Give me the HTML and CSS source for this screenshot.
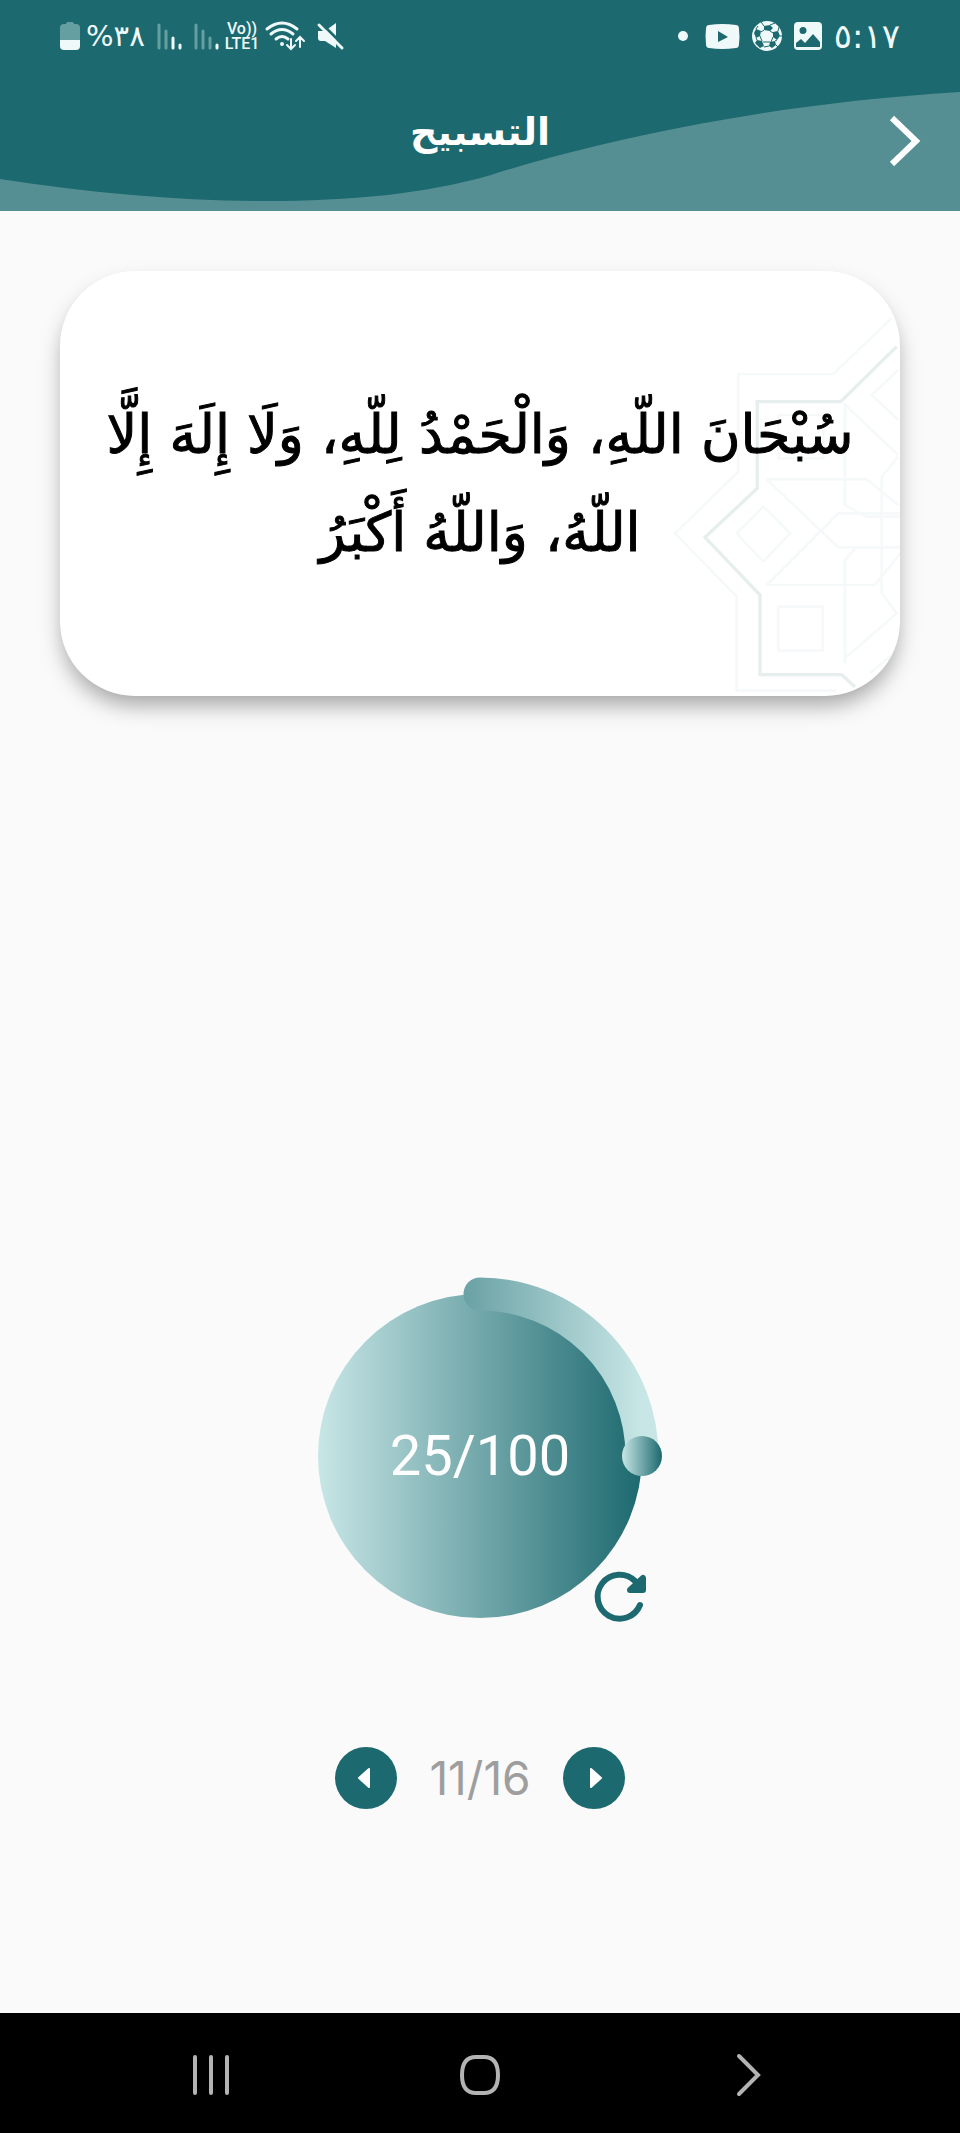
FILE: index.html
```html
<!DOCTYPE html>
<html lang="ar" dir="rtl">
<head>
    <meta charset="UTF-8">
    <meta name="viewport" content="width=device-width, initial-scale=1.0">
    <title>التسبيح</title>
    <link rel="stylesheet" href="styles.css">
</head>
<body>
    <header class="header">
        <svg class="wave" viewBox="0 0 960 211" preserveAspectRatio="none" aria-hidden="true">
            <path d="M0 179C90 193 180 201 266 201C350 201 425 194 491 175C560 153 730 106 960 92V211H0Z"/>
        </svg>
        <div class="status" dir="ltr">
            <div class="status-group">
                <svg width="20" height="28" viewBox="0 0 20 28">
                    <path fill="#659fa2" d="M6 2q0-2 2-2h4q2 0 2 2h2q4 0 4 4v13H0V6q0-4 4-4z"/>
                    <path d="M0 18h20v6q0 4-4 4H4q-4 0-4-4z"/>
                </svg>
                <span class="battery">%٣٨</span>
                <svg class="signal" width="25" height="27" viewBox="0 0 25 27">
                    <path stroke="#659fa2" d="M2 2v23M9 8v17"/>
                    <path d="M16 15v10M23 22v3"/>
                </svg>
                <svg class="signal" width="25" height="27" viewBox="0 0 25 27">
                    <path stroke="#659fa2" d="M2 2v23M9 8v17M16 15v10"/>
                    <path d="M23 22v3"/>
                </svg>
                <span class="volte"><span>Vo))</span><span>LTE1</span></span>
                <svg class="line-icon" width="40" height="30" viewBox="0 0 40 30">
                    <path d="M2 8Q17-4 32 8M6 13q11-9 22 0M11 18q6-5 12 0"/>
                    <path d="M26 18v10m-4-4l4 4 4-4M35 26V16m-4 4l4-4 4 4" stroke-width="2"/>
                    <circle class="dot" cx="17" cy="23" r="2"/>
                </svg>
                <svg class="mute" width="28" height="28" viewBox="0 0 28 28">
                    <path d="M1 9h7L19 1v25L8 19H4q-3 0-3-3z"/>
                    <path d="M5 2l21 21" stroke="#1c696f" stroke-width="3"/>
                    <path d="M2 3l23 23" stroke="#eff9fa" stroke-width="3" stroke-linecap="round"/>
                </svg>
            </div>
            <div class="status-group status-end">
                <svg class="more" width="12" height="12" viewBox="0 0 12 12"><circle cx="6" cy="6" r="5"/></svg>
                <svg width="35" height="25" viewBox="0 0 35 25">
                    <path fill-rule="evenodd" d="M4 1Q17-1 31 1q3 0 3 4 1 8 0 15 0 4-3 4-14 2-27 0-3 0-3-4-1-8 0-15 0-4 3-4zM13 7v11l10-5z"/>
                </svg>
                <svg width="30" height="30" viewBox="0 0 30 30">
                    <circle cx="15" cy="15" r="15"/>
                    <g fill="#1c696f">
                        <path d="M12 5l6-1 3 3-3 3-6-1zM21 11l5-1 2 5-3 4-4-3zM18 21l5-1 1 4-4 3-3-2zM5 19l5 1 2 5-4 2-5-5zM4 8l5 2-1 5-4 2-2-5z"/>
                    </g>
                    <path d="M9 11l3-2M18 10l3 2M21 16l-2 5M18 21h-7M8 15l2 5M12 5L9 1M18 4l5-2M26 10l1-4M25 19l-2 1M28 15h2M24 24l2 2M17 25l-5 1M4 17l1 2M4 8l2-3" fill="none" stroke="#1c696f"/>
                </svg>
                <svg width="28" height="28" viewBox="0 0 28 28">
                    <path fill-rule="evenodd" d="M4 0h20q4 0 4 4v20q0 4-4 4H4q-4 0-4-4V4q0-4 4-4zM9 5a3 3 0 100 7 3 3 0 000-7zM2 21v4h24v-5l-7-8-8 9-4-4z"/>
                </svg>
                <time class="clock">٥:١٧</time>
            </div>
        </div>
        <div class="title-bar">
            <h1>التسبيح</h1>
            <button class="back" type="button" aria-label="رجوع">
                <svg width="34" height="54" viewBox="0 0 34 54"><path d="M4 4l24 23L4 50"/></svg>
            </button>
        </div>
    </header>

    <main class="main">
        <section class="card">
            <svg class="pattern" width="230" height="386" viewBox="150 150 690 1158" aria-hidden="true">
                <g class="faint">
                    <path d="M815 175L640 342H355V635L165 820L350 1010V1292H650"/>
                    <path d="M835 330L755 405L835 480M670 430L835 585M475 465H610V595H475zM675 430V735L740 770H840M440 658H740L835 735M440 658L655 862H840M440 975L655 760H840M440 975H765L840 880M430 740L510 820L430 905L350 820zM475 1040H608V1172H475zM675 1210V900L710 860M675 1195L830 1060L785 1000V650L835 590M750 1240L840 1165"/>
                </g>
                <path class="strong" d="M830 260L662 425H412V685L255 832L420 1005V1244H665L705 1280"/>
            </svg>
            <p class="dhikr">سُبْحَانَ اللّهِ، وَالْحَمْدُ لِلّهِ، وَلَا إِلَهَ إِلَّا اللّهُ، وَاللّهُ أَكْبَرُ</p>
        </section>

        <section class="counter" dir="ltr">
            <button class="dial" type="button">
                <svg width="360" height="360" viewBox="0 0 360 360" aria-hidden="true">
                    <defs>
                        <linearGradient id="disc">
                            <stop offset="0" stop-color="#c8e6e6"/>
                            <stop offset="1" stop-color="#1c696f"/>
                        </linearGradient>
                        <linearGradient id="arc" gradientUnits="userSpaceOnUse" x1="18" y1="0" x2="342" y2="0">
                            <stop offset="0" stop-color="#1c696f"/>
                            <stop offset="1" stop-color="#c8e6e6"/>
                        </linearGradient>
                    </defs>
                    <circle cx="180" cy="180" r="162" fill="url(#disc)"/>
                    <path d="M180 18A162 162 0 01342 180" fill="none" stroke="url(#arc)" stroke-width="33" stroke-linecap="round"/>
                    <circle cx="342" cy="180" r="20" fill="url(#disc)"/>
                </svg>
                <span class="count">25/100</span>
            </button>
            <button class="reset" type="button" aria-label="إعادة">
                <svg width="54" height="54" viewBox="0 0 54 54">
                    <path class="reset-arc" d="M47 35A22 22 0 1 1 42 11"/>
                    <path class="reset-head" d="M50 8v12H37z"/>
                </svg>
            </button>
        </section>

        <nav class="pager" dir="ltr">
            <button type="button" aria-label="السابق">
                <svg width="16" height="22" viewBox="0 0 16 22"><path d="M11 2v18L1 11z"/></svg>
            </button>
            <span class="page">11/16</span>
            <button type="button" aria-label="التالي">
                <svg width="16" height="22" viewBox="0 0 16 22"><path d="M5 2v18l10-9z"/></svg>
            </button>
        </nav>
    </main>

    <footer class="system-nav" dir="ltr">
        <button type="button" aria-label="التطبيقات">
            <svg width="44" height="44" viewBox="0 0 44 44"><path d="M6 4v36M22 4v36M38 4v36"/></svg>
        </button>
        <button type="button" aria-label="الرئيسية">
            <svg width="44" height="44" viewBox="0 0 44 44"><path d="M4 22Q4 4 18 4h8Q40 4 40 22T26 40h-8Q4 40 4 22z"/></svg>
        </button>
        <button type="button" aria-label="رجوع">
            <svg width="44" height="44" viewBox="0 0 44 44"><path d="M12 3l19 19-19 19"/></svg>
        </button>
    </footer>
</body>
</html>
```

FILE: styles.css
```css
* {
    box-sizing: border-box;
}
body {
    margin: 0;
    min-height: 100vh;
    display: flex;
    flex-direction: column;
    background: #fafafa;
    font-family: "DejaVu Sans", sans-serif;
}
button {
    border: 0;
    padding: 0;
    background: none;
    cursor: pointer;
}
svg {
    display: block;
    flex: none;
    overflow: visible;
}

/* header */
.header {
    position: relative;
    height: 211px;
    background: #1c696f;
    color: #fff;
}
.wave {
    position: absolute;
    inset: 0;
    width: 100%;
    height: 100%;
    fill: #558f93;
}
.status {
    position: relative;
    display: flex;
    justify-content: space-between;
    height: 72px;
    padding: 0 60px;
    color: #eff9fa;
    fill: #eff9fa;
}
.status-group {
    display: flex;
    align-items: center;
    gap: 6px;
}
.status-end {
    gap: 12px;
}
.more {
    margin-right: 4px;
}
.mute {
    margin-left: 6px;
}
.battery {
    font-size: 29px;
    line-height: 32px;
}
.clock {
    font-size: 34px;
    line-height: 32px;
}
.signal,
.line-icon {
    fill: none;
    stroke: #eff9fa;
    stroke-width: 3;
    stroke-linecap: round;
}
.signal {
    margin-left: 6px;
}
.line-icon .dot {
    fill: #eff9fa;
    stroke: none;
}
.volte {
    display: flex;
    flex-direction: column;
    align-items: center;
    font: 500 16px/15px Roboto, sans-serif;
}
.title-bar {
    position: relative;
    display: flex;
    align-items: center;
    justify-content: center;
    height: 139px;
    padding-bottom: 20px;
}
.title-bar h1 {
    margin: 0;
    font-size: 38px;
    line-height: 56px;
}
.back {
    position: absolute;
    right: 38px;
    top: 42px;
}
.back svg {
    fill: none;
    stroke: #fff;
    stroke-width: 6;
}

/* content */
.main {
    flex: 1;
    display: flex;
    flex-direction: column;
    align-items: center;
    padding: 60px 60px 204px;
}
.card {
    position: relative;
    overflow: hidden;
    width: 100%;
    min-height: 425px;
    display: flex;
    align-items: center;
    justify-content: center;
    padding: 40px;
    border-radius: 75px;
    background: #fff;
    box-shadow: 0 12px 22px -3px rgba(0, 0, 0, .35);
}
.pattern {
    position: absolute;
    right: 0;
    bottom: 0;
    fill: none;
    stroke-width: 8;
}
.faint {
    stroke: #f6f9fa;
}
.strong {
    stroke: #e6eeee;
    stroke-width: 10;
}
.dhikr {
    position: relative;
    margin: 0;
    color: #000;
    font-size: 54px;
    line-height: 98px;
    text-align: center;
    -webkit-text-stroke: 1px #000;
}
.counter {
    position: relative;
    margin-top: auto;
}
.dial {
    display: grid;
    place-items: center;
}
.dial > * {
    grid-area: 1 / 1;
}
.count {
    color: #fff;
    font: 56px/64px Roboto, sans-serif;
}
.reset {
    position: absolute;
    right: 13px;
    bottom: 12px;
}
.reset-arc {
    fill: none;
    stroke: #1c696f;
    stroke-width: 6;
    stroke-linecap: round;
}
.reset-head {
    fill: #1c696f;
    stroke: #1c696f;
    stroke-width: 6;
    stroke-linejoin: round;
}
.pager {
    display: flex;
    align-items: center;
    gap: 32px;
    margin-top: 111px;
}
.pager button {
    display: grid;
    place-items: center;
    width: 62px;
    height: 62px;
    border-radius: 50%;
    background: #1c696f;
}
.pager svg {
    fill: #fff;
    stroke: #fff;
    stroke-width: 2;
    stroke-linejoin: round;
}
.page {
    color: #9e9e9e;
    font: 46px/52px Inter, sans-serif;
}

/* system navigation */
.system-nav {
    display: flex;
    justify-content: space-around;
    align-items: center;
    height: 120px;
    padding: 4px 77px 0;
    background: #000;
}
.system-nav svg {
    fill: none;
    stroke: #b3b3b3;
    stroke-width: 4;
    stroke-linecap: round;
}
```
